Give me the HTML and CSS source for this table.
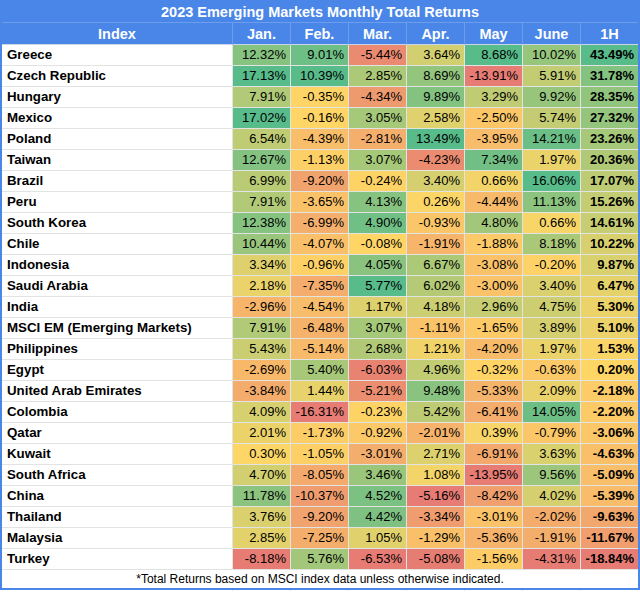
FILE: index.html
```html
<!DOCTYPE html>
<html lang="en">
<head>
<meta charset="utf-8">
<title>2023 Emerging Markets Monthly Total Returns</title>
<link rel="stylesheet" href="styles.css">
</head>
<body>
<div class="sheet">
  <div class="title">2023 Emerging Markets Monthly Total Returns</div>
  <div class="hrow">
    <div class="hcell">Index</div><div class="hcell">Jan.</div><div class="hcell">Feb.</div><div class="hcell">Mar.</div><div class="hcell">Apr.</div><div class="hcell">May</div><div class="hcell">June</div><div class="hcell last">1H</div>
  </div>
  <div class="row"><div class="name">Greece</div><div class="num">12.32%</div><div class="num">9.01%</div><div class="num">-5.44%</div><div class="num">3.64%</div><div class="num">8.68%</div><div class="num">10.02%</div><div class="num total">43.49%</div></div>
  <div class="row"><div class="name">Czech Republic</div><div class="num">17.13%</div><div class="num">10.39%</div><div class="num">2.85%</div><div class="num">8.69%</div><div class="num">-13.91%</div><div class="num">5.91%</div><div class="num total">31.78%</div></div>
  <div class="row"><div class="name">Hungary</div><div class="num">7.91%</div><div class="num">-0.35%</div><div class="num">-4.34%</div><div class="num">9.89%</div><div class="num">3.29%</div><div class="num">9.92%</div><div class="num total">28.35%</div></div>
  <div class="row"><div class="name">Mexico</div><div class="num">17.02%</div><div class="num">-0.16%</div><div class="num">3.05%</div><div class="num">2.58%</div><div class="num">-2.50%</div><div class="num">5.74%</div><div class="num total">27.32%</div></div>
  <div class="row"><div class="name">Poland</div><div class="num">6.54%</div><div class="num">-4.39%</div><div class="num">-2.81%</div><div class="num">13.49%</div><div class="num">-3.95%</div><div class="num">14.21%</div><div class="num total">23.26%</div></div>
  <div class="row"><div class="name">Taiwan</div><div class="num">12.67%</div><div class="num">-1.13%</div><div class="num">3.07%</div><div class="num">-4.23%</div><div class="num">7.34%</div><div class="num">1.97%</div><div class="num total">20.36%</div></div>
  <div class="row"><div class="name">Brazil</div><div class="num">6.99%</div><div class="num">-9.20%</div><div class="num">-0.24%</div><div class="num">3.40%</div><div class="num">0.66%</div><div class="num">16.06%</div><div class="num total">17.07%</div></div>
  <div class="row"><div class="name">Peru</div><div class="num">7.91%</div><div class="num">-3.65%</div><div class="num">4.13%</div><div class="num">0.26%</div><div class="num">-4.44%</div><div class="num">11.13%</div><div class="num total">15.26%</div></div>
  <div class="row"><div class="name">South Korea</div><div class="num">12.38%</div><div class="num">-6.99%</div><div class="num">4.90%</div><div class="num">-0.93%</div><div class="num">4.80%</div><div class="num">0.66%</div><div class="num total">14.61%</div></div>
  <div class="row"><div class="name">Chile</div><div class="num">10.44%</div><div class="num">-4.07%</div><div class="num">-0.08%</div><div class="num">-1.91%</div><div class="num">-1.88%</div><div class="num">8.18%</div><div class="num total">10.22%</div></div>
  <div class="row"><div class="name">Indonesia</div><div class="num">3.34%</div><div class="num">-0.96%</div><div class="num">4.05%</div><div class="num">6.67%</div><div class="num">-3.08%</div><div class="num">-0.20%</div><div class="num total">9.87%</div></div>
  <div class="row"><div class="name">Saudi Arabia</div><div class="num">2.18%</div><div class="num">-7.35%</div><div class="num">5.77%</div><div class="num">6.02%</div><div class="num">-3.00%</div><div class="num">3.40%</div><div class="num total">6.47%</div></div>
  <div class="row"><div class="name">India</div><div class="num">-2.96%</div><div class="num">-4.54%</div><div class="num">1.17%</div><div class="num">4.18%</div><div class="num">2.96%</div><div class="num">4.75%</div><div class="num total">5.30%</div></div>
  <div class="row"><div class="name">MSCI EM (Emerging Markets)</div><div class="num">7.91%</div><div class="num">-6.48%</div><div class="num">3.07%</div><div class="num">-1.11%</div><div class="num">-1.65%</div><div class="num">3.89%</div><div class="num total">5.10%</div></div>
  <div class="row"><div class="name">Philippines</div><div class="num">5.43%</div><div class="num">-5.14%</div><div class="num">2.68%</div><div class="num">1.21%</div><div class="num">-4.20%</div><div class="num">1.97%</div><div class="num total">1.53%</div></div>
  <div class="row"><div class="name">Egypt</div><div class="num">-2.69%</div><div class="num">5.40%</div><div class="num">-6.03%</div><div class="num">4.96%</div><div class="num">-0.32%</div><div class="num">-0.63%</div><div class="num total">0.20%</div></div>
  <div class="row"><div class="name">United Arab Emirates</div><div class="num">-3.84%</div><div class="num">1.44%</div><div class="num">-5.21%</div><div class="num">9.48%</div><div class="num">-5.33%</div><div class="num">2.09%</div><div class="num total">-2.18%</div></div>
  <div class="row"><div class="name">Colombia</div><div class="num">4.09%</div><div class="num">-16.31%</div><div class="num">-0.23%</div><div class="num">5.42%</div><div class="num">-6.41%</div><div class="num">14.05%</div><div class="num total">-2.20%</div></div>
  <div class="row"><div class="name">Qatar</div><div class="num">2.01%</div><div class="num">-1.73%</div><div class="num">-0.92%</div><div class="num">-2.01%</div><div class="num">0.39%</div><div class="num">-0.79%</div><div class="num total">-3.06%</div></div>
  <div class="row"><div class="name">Kuwait</div><div class="num">0.30%</div><div class="num">-1.05%</div><div class="num">-3.01%</div><div class="num">2.71%</div><div class="num">-6.91%</div><div class="num">3.63%</div><div class="num total">-4.63%</div></div>
  <div class="row"><div class="name">South Africa</div><div class="num">4.70%</div><div class="num">-8.05%</div><div class="num">3.46%</div><div class="num">1.08%</div><div class="num">-13.95%</div><div class="num">9.56%</div><div class="num total">-5.09%</div></div>
  <div class="row"><div class="name">China</div><div class="num">11.78%</div><div class="num">-10.37%</div><div class="num">4.52%</div><div class="num">-5.16%</div><div class="num">-8.42%</div><div class="num">4.02%</div><div class="num total">-5.39%</div></div>
  <div class="row"><div class="name">Thailand</div><div class="num">3.76%</div><div class="num">-9.20%</div><div class="num">4.42%</div><div class="num">-3.34%</div><div class="num">-3.01%</div><div class="num">-2.02%</div><div class="num total">-9.63%</div></div>
  <div class="row"><div class="name">Malaysia</div><div class="num">2.85%</div><div class="num">-7.25%</div><div class="num">1.05%</div><div class="num">-1.29%</div><div class="num">-5.36%</div><div class="num">-1.91%</div><div class="num total">-11.67%</div></div>
  <div class="row"><div class="name">Turkey</div><div class="num">-8.18%</div><div class="num">5.76%</div><div class="num">-6.53%</div><div class="num">-5.08%</div><div class="num">-1.56%</div><div class="num">-4.31%</div><div class="num total">-18.84%</div></div>
  <div class="footer">*Total Returns based on MSCI index data unless otherwise indicated.</div>
</div>
<div class="below">
  <span class="gcol"></span><span class="gcol"></span><span class="gcol"></span><span class="gcol"></span><span class="gcol"></span><span class="gcol"></span><span class="gcol"></span><span class="gcol lastcol"></span>
</div>
<script src="script.js"></script>
</body>
</html>
```

FILE: styles.css
```css
body {
  margin: 0;
  background: #ffffff;
  font-family: "Liberation Sans", Arial, sans-serif;
  color: #000000;
}

.sheet {
  width: 640px;
  box-sizing: border-box;
  border: 2px solid #4a86e8;
  border-top: 0;
  display: grid;
  grid-template-columns: 231px repeat(6, 58px) 57px;
}

.title {
  grid-column: 1 / -1;
  height: 23px;
  box-sizing: border-box;
  padding-top: 2px;
  background: #4a86e8;
  border-bottom: 1px solid #6d9eeb;
  color: #ffffff;
  font-weight: bold;
  font-size: 14.5px;
  line-height: 20px;
  text-align: center;
}

.hrow,
.row {
  display: contents;
}

.hcell {
  height: 22px;
  box-sizing: border-box;
  padding-top: 1px;
  background: #4a86e8;
  border-right: 1px solid #6d9eeb;
  border-bottom: 1px solid #c9d5e8;
  color: #ffffff;
  font-weight: bold;
  font-size: 14.5px;
  line-height: 20px;
  text-align: center;
}

.hcell.last {
  border-right: 0;
}

.name,
.num {
  height: 21px;
  box-sizing: border-box;
  border-right: 1px solid #e2e3e3;
  border-bottom: 1px solid #e2e3e3;
  font-size: 13px;
  line-height: 20px;
  white-space: nowrap;
  overflow: hidden;
}

.name {
  padding-left: 5px;
  font-weight: bold;
  font-size: 13.3px;
}

.num {
  text-align: right;
  padding-right: 4px;
}

.num.total {
  font-weight: bold;
  border-right: 0;
}

.footer {
  grid-column: 1 / -1;
  height: 18px;
  box-sizing: border-box;
  font-size: 12px;
  line-height: 18px;
  text-align: center;
}

.below {
  display: grid;
  grid-template-columns: 233px repeat(6, 58px) 59px;
  height: 1px;
}

.gcol {
  border-right: 1px solid #e2e3e3;
}

.gcol.lastcol {
  border-right: 0;
}
```

FILE: script.js
```js
(function () {
  var green = [87, 187, 138];
  var yellow = [255, 214, 102];
  var red = [230, 124, 115];
  var rows = Array.prototype.slice.call(document.querySelectorAll('.row'));
  function mix(a, b, t) {
    return 'rgb(' + [0, 1, 2].map(function (i) {
      return Math.round(a[i] + (b[i] - a[i]) * t);
    }).join(',') + ')';
  }
  for (var c = 1; c <= 7; c++) {
    var cells = rows.map(function (r) { return r.children[c]; });
    var vals = cells.map(function (el) { return parseFloat(el.textContent); });
    var max = Math.max.apply(null, vals);
    var min = Math.min.apply(null, vals);
    cells.forEach(function (el, i) {
      var v = vals[i];
      var color = v >= 0 ? mix(yellow, green, max > 0 ? v / max : 0)
                         : mix(yellow, red, min < 0 ? v / min : 0);
      el.style.backgroundColor = color;
    });
  }
})();
```
